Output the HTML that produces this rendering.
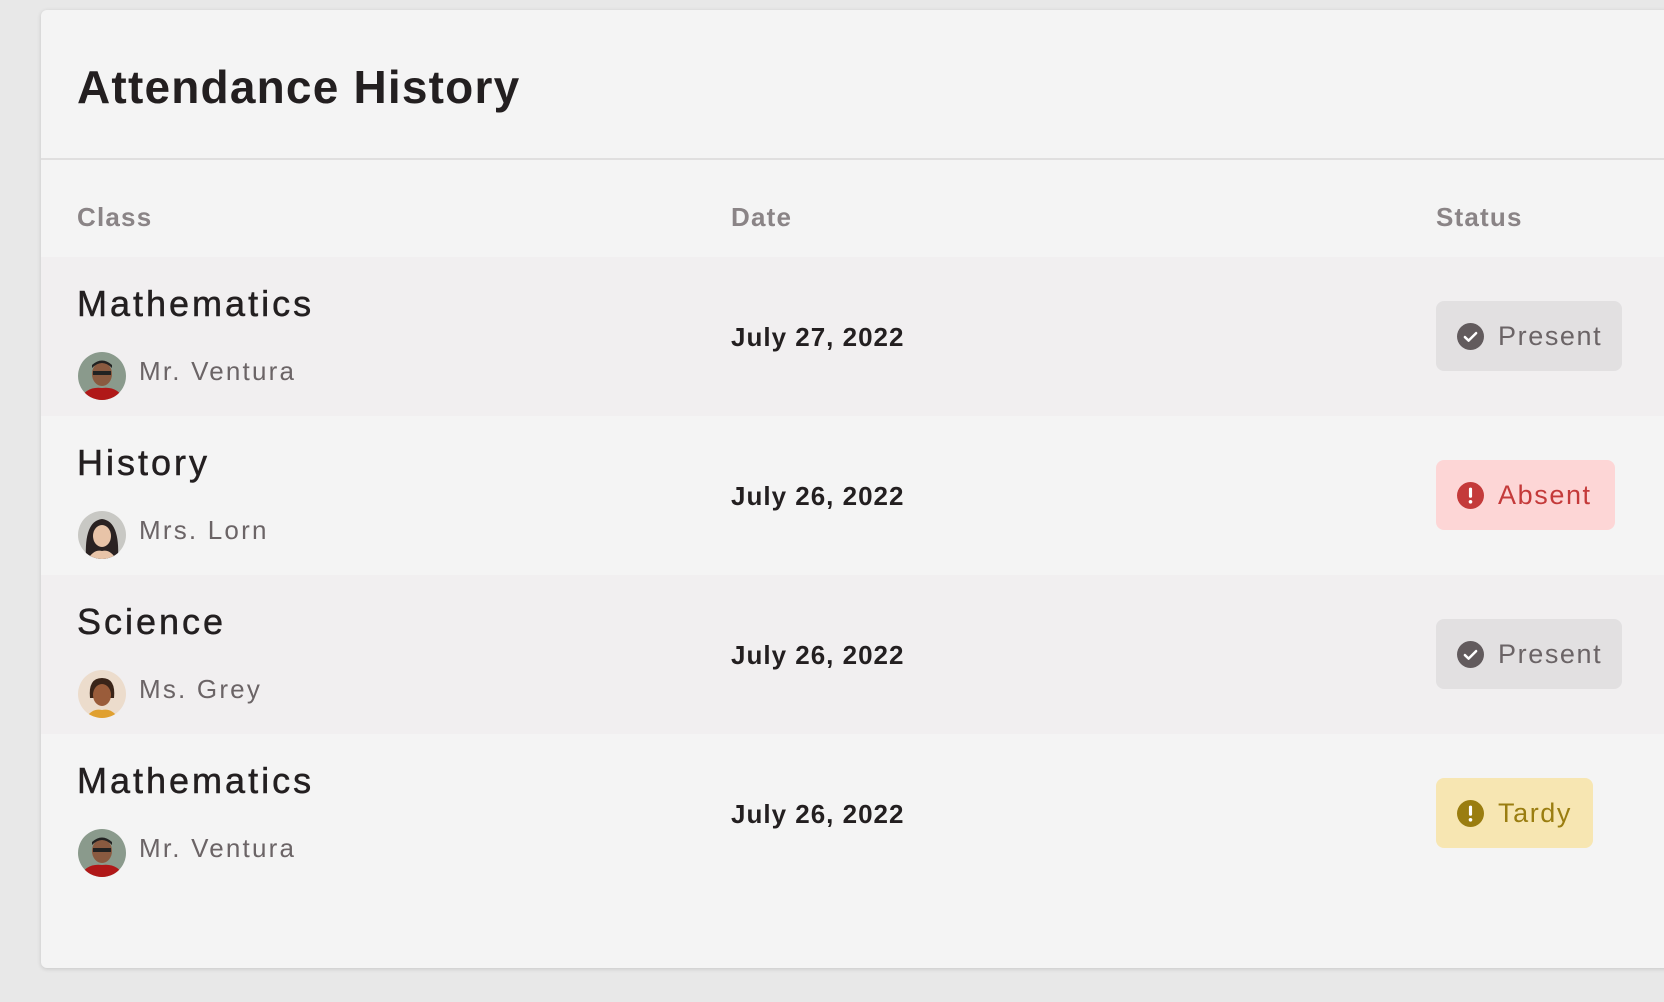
<!DOCTYPE html>
<html><head><style>
body{margin:0;width:1664px;height:1002px;background:#e8e8e8;font-family:"Liberation Sans",sans-serif;overflow:hidden;position:relative}
.card{position:absolute;left:41px;top:10px;width:1700px;height:958px;background:#f4f4f4;border-radius:6px;box-shadow:0 1px 4px rgba(0,0,0,.15)}
.t{position:absolute;white-space:nowrap}
h1{position:absolute;left:36px;top:50px;margin:0;font-size:46px;font-weight:bold;color:#231f20;letter-spacing:1.2px}
.div{position:absolute;left:0;top:148px;width:100%;height:2px;background:#e0dfdf}
.hd{font-size:26px;font-weight:bold;color:#8a8486;top:192px;letter-spacing:1.2px}
.row{position:absolute;left:0;width:100%;height:159px}
.cls{left:36px;top:26px;font-size:36px;color:#231f20;-webkit-text-stroke:0.5px #231f20;letter-spacing:3px}
.tch{left:98px;top:99px;font-size:26px;color:#6b6466;letter-spacing:2.2px}
.av{position:absolute;left:37px;top:95px;width:48px;height:48px;border-radius:50%;overflow:hidden}
.dt{left:690px;top:65px;font-size:26px;font-weight:bold;color:#231f20;letter-spacing:1px}
.bd{position:absolute;left:1395px;top:44px;height:70px;border-radius:8px;display:flex;align-items:center;padding:0 18px 0 21px;font-size:27px;box-sizing:border-box;letter-spacing:1.6px}
.bd svg{margin-right:14px}
</style></head><body>
<div class="t" style="left:40px;top:-16px;font-size:18px;color:#999">Frame 33</div>
<div class="card">
<h1>Attendance History</h1>
<div class="div"></div>
<div class="t hd" style="left:36px">Class</div>
<div class="t hd" style="left:690px">Date</div>
<div class="t hd" style="left:1395px">Status</div>

<div class="row" style="top:247px;background:#f1eff0">
<div class="t cls">Mathematics</div>
<div class="av"><svg width="48" height="48"><rect width="48" height="48" fill="#8a9a8c"/><ellipse cx="24" cy="22" rx="10" ry="12" fill="#8a5a40"/><path d="M14 16 Q24 6 34 16 L34 13 Q24 4 14 13Z" fill="#222"/><rect x="15" y="19" width="18" height="4" fill="#222"/><path d="M2 48 Q8 34 24 36 Q40 34 46 48Z" fill="#b01818"/></svg></div>
<div class="t tch">Mr. Ventura</div>
<div class="t dt">July 27, 2022</div>
<div class="bd" style="background:#e2e0e1;color:#6b6466;width:186px"><svg width="27" height="27" viewBox="0 0 24 24"><circle cx="12" cy="12" r="12" fill="#625b5d"/><path d="M7 12.5l3.3 3.2L17 9" stroke="#fff" stroke-width="2.2" fill="none" stroke-linecap="round" stroke-linejoin="round"/></svg>Present</div>
</div>

<div class="row" style="top:406px;background:#f4f4f4">
<div class="t cls">History</div>
<div class="av"><svg width="48" height="48"><rect width="48" height="48" fill="#c8c8c4"/><path d="M8 48 Q6 10 24 8 Q42 10 40 48Z" fill="#2a2222"/><ellipse cx="24" cy="25" rx="9" ry="11" fill="#e8c4a8"/><path d="M10 48 Q16 38 24 40 Q32 38 38 48Z" fill="#e8c4a8"/></svg></div>
<div class="t tch">Mrs. Lorn</div>
<div class="t dt">July 26, 2022</div>
<div class="bd" style="background:#fdd6d6;color:#c43a3a;width:179px"><svg width="27" height="27" viewBox="0 0 24 24"><circle cx="12" cy="12" r="12" fill="#c43a3a"/><rect x="10.6" y="5" width="2.8" height="9" rx="1.2" fill="#fff"/><circle cx="12" cy="17.6" r="1.6" fill="#fff"/></svg>Absent</div>
</div>

<div class="row" style="top:565px;background:#f1eff0">
<div class="t cls">Science</div>
<div class="av"><svg width="48" height="48"><rect width="48" height="48" fill="#ecdccc"/><path d="M12 28 Q10 8 24 8 Q38 8 36 28Z" fill="#3a2418"/><ellipse cx="24" cy="25" rx="9" ry="11" fill="#9a5c3a"/><path d="M8 48 Q14 38 24 40 Q34 38 40 48Z" fill="#e0a030"/></svg></div>
<div class="t tch">Ms. Grey</div>
<div class="t dt">July 26, 2022</div>
<div class="bd" style="background:#e2e0e1;color:#6b6466;width:186px"><svg width="27" height="27" viewBox="0 0 24 24"><circle cx="12" cy="12" r="12" fill="#625b5d"/><path d="M7 12.5l3.3 3.2L17 9" stroke="#fff" stroke-width="2.2" fill="none" stroke-linecap="round" stroke-linejoin="round"/></svg>Present</div>
</div>

<div class="row" style="top:724px;background:#f4f4f4">
<div class="t cls">Mathematics</div>
<div class="av"><svg width="48" height="48"><rect width="48" height="48" fill="#8a9a8c"/><ellipse cx="24" cy="22" rx="10" ry="12" fill="#8a5a40"/><path d="M14 16 Q24 6 34 16 L34 13 Q24 4 14 13Z" fill="#222"/><rect x="15" y="19" width="18" height="4" fill="#222"/><path d="M2 48 Q8 34 24 36 Q40 34 46 48Z" fill="#b01818"/></svg></div>
<div class="t tch">Mr. Ventura</div>
<div class="t dt">July 26, 2022</div>
<div class="bd" style="background:#f7e6b2;color:#9a7d10;width:157px"><svg width="27" height="27" viewBox="0 0 24 24"><circle cx="12" cy="12" r="12" fill="#9a7d10"/><rect x="10.6" y="5" width="2.8" height="9" rx="1.2" fill="#fff"/><circle cx="12" cy="17.6" r="1.6" fill="#fff"/></svg>Tardy</div>
</div>
</div>
</body></html>
